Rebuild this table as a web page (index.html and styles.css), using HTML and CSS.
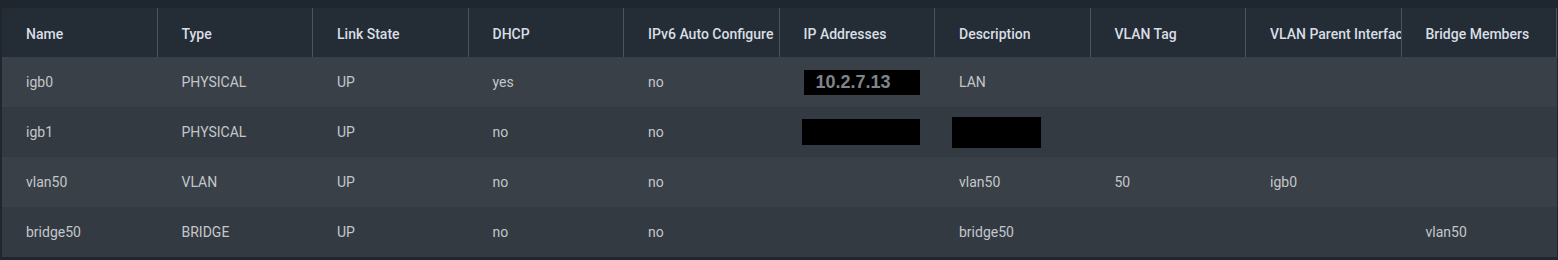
FILE: index.html
```html
<!DOCTYPE html>
<html lang="en">
<head>
    <meta charset="UTF-8">
    <meta name="viewport" content="width=device-width, initial-scale=1.0">
    <title>Interfaces</title>
    <link rel="stylesheet" href="styles.css">
</head>
<body>
    <div class="panel">
        <table class="iface-table">
            <thead>
                <tr>
                    <th>Name</th>
                    <th>Type</th>
                    <th>Link State</th>
                    <th>DHCP</th>
                    <th>IPv6 Auto Configure</th>
                    <th>IP Addresses</th>
                    <th>Description</th>
                    <th>VLAN Tag</th>
                    <th>VLAN Parent Interface</th>
                    <th>Bridge Members</th>
                </tr>
            </thead>
            <tbody>
                <tr>
                    <td>igb0</td>
                    <td>PHYSICAL</td>
                    <td>UP</td>
                    <td>yes</td>
                    <td>no</td>
                    <td><span class="redact ip">10.2.7.13</span></td>
                    <td>LAN</td>
                    <td></td>
                    <td></td>
                    <td></td>
                </tr>
                <tr>
                    <td>igb1</td>
                    <td>PHYSICAL</td>
                    <td>UP</td>
                    <td>no</td>
                    <td>no</td>
                    <td><span class="redact ip-blank"></span></td>
                    <td><span class="redact desc-blank"></span></td>
                    <td></td>
                    <td></td>
                    <td></td>
                </tr>
                <tr>
                    <td>vlan50</td>
                    <td>VLAN</td>
                    <td>UP</td>
                    <td>no</td>
                    <td>no</td>
                    <td></td>
                    <td>vlan50</td>
                    <td>50</td>
                    <td>igb0</td>
                    <td></td>
                </tr>
                <tr>
                    <td>bridge50</td>
                    <td>BRIDGE</td>
                    <td>UP</td>
                    <td>no</td>
                    <td>no</td>
                    <td></td>
                    <td>bridge50</td>
                    <td></td>
                    <td></td>
                    <td>vlan50</td>
                </tr>
            </tbody>
        </table>
    </div>
</body>
</html>
```

FILE: styles.css
```css
body {
    margin: 0;
    background-color: #1f262d;
    font-family: Roboto, 'Liberation Sans', sans-serif;
    font-size: 14px;
}
.panel {
    padding: 8px 0 0 2px;
    height: 252px;
    overflow: hidden;
}
.iface-table {
    width: 1555px;
    table-layout: fixed;
    border-collapse: separate;
    border-spacing: 0;
}
.iface-table th {
    height: 49px;
    padding: 3px 0 0 24px;
    box-sizing: border-box;
    background-color: #242c35;
    color: #d8dee5;
    font-weight: 500;
    text-align: left;
    white-space: nowrap;
    overflow: hidden;
    border-right: 1px solid #4a525b;
}
.iface-table td {
    height: 50px;
    padding: 0 0 0 24px;
    box-sizing: border-box;
    color: #c3c7cb;
    white-space: nowrap;
    overflow: hidden;
}
.iface-table tbody tr:nth-child(odd) td {
    background-color: #3a4047;
}
.iface-table tbody tr:nth-child(even) td {
    background-color: #343a41;
}
.redact {
    display: inline-block;
    background-color: #000;
    vertical-align: middle;
}
.ip {
    width: 116px;
    height: 25px;
    padding-left: 12px;
    box-sizing: border-box;
    line-height: 25px;
    font-family: 'Liberation Sans', sans-serif;
    font-size: 18px;
    font-weight: bold;
    color: #7f858b;
}
.ip-blank {
    width: 118px;
    height: 26px;
    margin-left: -2px;
}
.desc-blank {
    width: 89px;
    height: 31px;
    margin-left: -7px;
}
```
